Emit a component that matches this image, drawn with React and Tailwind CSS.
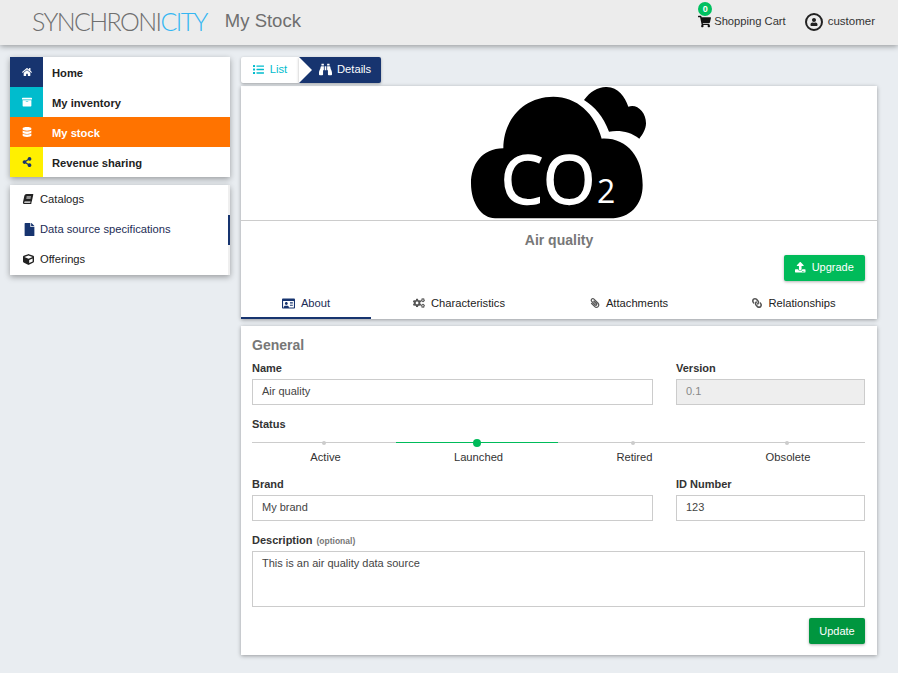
import React from "react";
import { FaHome, FaArchive, FaDatabase, FaShareAlt, FaBook, FaFile, FaCube, FaList, FaBinoculars, FaShoppingCart, FaUser, FaRegIdCard, FaCogs, FaPaperclip, FaLink, FaUpload } from "react-icons/fa";

const nav = [
  { icon: FaHome, label: "Home", box: "bg-[#17346f] text-white" },
  { icon: FaArchive, label: "My inventory", box: "bg-[#00bccd] text-white" },
  { icon: FaDatabase, label: "My stock", box: "bg-[#ff7300] text-white", active: true },
  { icon: FaShareAlt, label: "Revenue sharing", box: "bg-[#fff000] text-[#17346f]" },
];
const sub = [
  { icon: FaBook, label: "Catalogs", iconClass: "text-[10px] -skew-x-12" },
  { icon: FaFile, label: "Data source specifications", iconClass: "text-[13px]", active: true },
  { icon: FaCube, label: "Offerings", iconClass: "text-[11px]" },
];
const tabs = [
  { icon: FaRegIdCard, label: "About", active: true, iconClass: "text-[13px]" },
  { icon: FaCogs, label: "Characteristics", iconClass: "text-[12px]" },
  { icon: FaPaperclip, label: "Attachments", iconClass: "text-[10px] -scale-x-100" },
  { icon: FaLink, label: "Relationships", iconClass: "text-[10px] -scale-x-100" },
];
const steps = [
  { label: "Active" },
  { label: "Launched", active: true },
  { label: "Retired" },
  { label: "Obsolete" },
];

function Field({ label, hint, children }) {
  return (
    <div className="flex flex-col">
      <label className="h-[14px] leading-[14px] font-bold text-[#333] text-[11px] mb-[4px]">
        {label}
        {hint && <span className="text-[8.5px] text-[#777] ml-1">{hint}</span>}
      </label>
      {children}
    </div>
  );
}

function Input({ value, disabled }) {
  return (
    <div className={`h-[26px] border border-[#ccc] px-[9px] text-[11px] leading-[22px] ${disabled ? "bg-[#eee] text-[#888]" : "bg-white text-[#444]"}`}>
      {value}
    </div>
  );
}

function Cloud() {
  return (
    <svg width="238" height="134" viewBox="0 18 714 402" className="block overflow-visible">
      <path d="M190 205C125 205 93 255 93 310C93 370 125 415 165 415L510 415C570 415 608 375 608 315C608 230 560 172 485 176C465 100 410 50 340 50C250 50 190 120 190 205Z" fill="#000" />
      <path d="M432 60C450 35 475 20 500 21C535 22 555 50 565 80C590 70 618 95 618 130C618 148 607 165 598 176C570 155 540 150 507 155C490 110 465 80 432 60Z" fill="#000" />
      <text x="182" y="371" fontFamily="'Open Sans', sans-serif" fontSize="202" fill="#fff" stroke="#fff" strokeWidth="4">CO</text>
      <text x="471" y="368" fontFamily="'Open Sans', sans-serif" fontSize="96" fill="#fff">2</text>
    </svg>
  );
}

export default function App() {
  return (
    <div className="w-[898px] h-[673px] overflow-hidden bg-[#e9edf1] text-[11.2px] text-[#222]" style={{ fontFamily: "'Liberation Sans', Arial, sans-serif" }}>
      <header className="h-[45px] bg-[#ececec] shadow-[0_1px_6px_rgba(0,0,0,0.4)] flex items-center pl-[32px] pr-[23px] pb-[2px] relative">
        <div className="text-[25px] tracking-[-1.6px] leading-none font-light flex" style={{ fontFamily: "'Lato', sans-serif" }}>
          <span className="text-[#6f6f6f]">SYNCHRONI</span>
          <span className="text-[#35b6f2]">CITY</span>
        </div>
        <div className="ml-[18px] text-[18.5px] text-[#6f6f6f] leading-none">My Stock</div>
        <div className="ml-auto flex items-center text-[#333]">
          <div className="relative flex items-center">
            <FaShoppingCart className="text-[13px] text-[#111] mr-[3px]" />
            <span className="absolute left-0 top-[-11px] w-[14px] h-[14px] rounded-full bg-[#00c060] text-white text-[9px] font-bold text-center leading-[14px]">0</span>
            <span>Shopping Cart</span>
          </div>
          <div className="flex items-center ml-[19px] text-[11.5px]">
            <span className="w-[18px] h-[18px] rounded-full border-2 border-[#222] flex items-center justify-center mr-[5px]">
              <FaUser className="text-[8px] text-[#222]" />
            </span>
            <span>customer</span>
          </div>
        </div>
      </header>

      <div className="flex items-start pl-[10px] pt-[12px]">
        <aside className="w-[220px] shrink-0">
          <nav className="bg-white shadow-[0_2px_6px_rgba(0,0,0,0.35)]">
            {nav.map(({ icon: Icon, label, box, active }) => (
              <div key={label} className={`h-[30px] flex items-center font-bold ${active ? "bg-[#ff7300] text-white" : "text-[#222]"}`}>
                <span className={`w-[33px] h-[30px] flex items-center justify-center text-[10px] ${box}`}>
                  <Icon />
                </span>
                <span className="ml-[9px] pt-[2px]">{label}</span>
              </div>
            ))}
          </nav>
          <nav className="mt-[8px] w-[220px] bg-white shadow-[0_2px_6px_rgba(0,0,0,0.35)]">
            {sub.map(({ icon: Icon, label, active, iconClass }) => (
              <div key={label} className={`h-[30px] flex items-center pl-[13px] pb-[2px] border-r-2 ${active ? "border-[#17346f] text-[#1c2c55]" : "border-[#efefef] text-[#222]"}`}>
                <span className="w-[17px] flex justify-start">
                  <Icon className={`${iconClass} ${active ? "text-[#17346f]" : "text-[#222]"}`} />
                </span>
                <span>{label}</span>
              </div>
            ))}
          </nav>
        </aside>

        <main className="ml-[11px] w-[636px] shrink-0">
          <div className="flex h-[26px]">
            <div className="w-[58px] bg-white rounded-l-[2px] flex items-center justify-center text-[#00bccd] pb-[1px] shadow-[0_1px_3px_rgba(0,0,0,0.3)]">
              <FaList className="text-[11px] mr-[6px]" />
              List
            </div>
            <div className="relative w-[82px] bg-[#17346f] rounded-r-[2px] flex items-center pl-[20px] pb-[1px] text-white shadow-[0_1px_3px_rgba(0,0,0,0.3)]">
              <span className="absolute left-0 top-0 w-0 h-0 border-y-[13px] border-y-transparent border-l-[13px] border-l-white" />
              <FaBinoculars className="text-[13px] mr-[5px]" />
              Details
            </div>
          </div>

          <section className="mt-[3px] bg-white shadow-[0_1px_4px_rgba(0,0,0,0.35)]">
            <div className="flex justify-center border-b border-[#ccc]">
              <Cloud />
            </div>
            <h2 className="text-center text-[14px] font-bold text-[#777] mt-[11px] leading-[17px]">Air quality</h2>
            <div className="flex justify-end pr-[12px] mt-[6px]">
              <button className="w-[81px] h-[26px] rounded-[2px] bg-[#00bb5a] text-white text-[11px] flex items-center justify-center pb-[1px] shadow-[0_1px_3px_rgba(0,0,0,0.3)]">
                <FaUpload className="text-[10.5px] mr-[6px]" />
                Upgrade
              </button>
            </div>
            <div className="grid grid-cols-[130px_176px_164px_166px] h-[38px]">
              {tabs.map(({ icon: Icon, label, active, iconClass }) => (
                <div key={label} className={`h-[30px] mt-[8px] flex items-center justify-center border-b-2 ${active ? "border-[#17346f] text-[#1c2c55]" : "border-transparent text-[#222]"}`}>
                  <Icon className={`${iconClass} mr-[6px] ${active ? "text-[#17346f]" : "text-[#555]"}`} />
                  {label}
                </div>
              ))}
            </div>
          </section>

          <section className="mt-[7px] bg-white shadow-[0_1px_4px_rgba(0,0,0,0.35)] pl-[11px] pr-[12px] pt-[11px] h-[329px]">
            <h3 className="text-[14px] font-bold text-[#777] leading-[16px]">General</h3>
            <div className="grid grid-cols-[401px_189px] gap-x-[23px] mt-[8px]">
              <Field label="Name"><Input value="Air quality" /></Field>
              <Field label="Version"><Input value="0.1" disabled /></Field>
            </div>
            <div className="mt-[12px] font-bold text-[11px] text-[#333] leading-[14px]">Status</div>
            <div className="grid grid-cols-[144px_162px_150px_157px] mt-[11px]">
              {steps.map(({ label, active }) => (
                <div key={label} className="flex flex-col items-center">
                  <div className={`relative w-full h-px ${active ? "bg-[#00bb5a]" : "bg-[#ccc]"}`}>
                    <span className={`absolute top-1/2 left-1/2 -translate-x-1/2 -translate-y-1/2 rounded-full ${active ? "w-[8px] h-[8px] bg-[#00bb5a]" : "w-[4px] h-[4px] bg-[#ccc]"}`} />
                  </div>
                  <span className="mt-[8px] leading-[13px] text-[#333] pl-[3px]">{label}</span>
                </div>
              ))}
            </div>
            <div className="grid grid-cols-[401px_189px] gap-x-[23px] mt-[13px]">
              <Field label="Brand"><Input value="My brand" /></Field>
              <Field label="ID Number"><Input value="123" /></Field>
            </div>
            <div className="mt-[12px]">
              <Field label="Description" hint="(optional)">
                <div className="h-[56px] border border-[#ccc] px-[9px] py-[5px] text-[11px] leading-[13px] text-[#444]">This is an air quality data source</div>
              </Field>
            </div>
            <div className="flex justify-end mt-[11px]">
              <button className="w-[56px] h-[26px] rounded-[2px] bg-[#00963f] text-white text-[11px] shadow-[0_1px_3px_rgba(0,0,0,0.3)]">Update</button>
            </div>
          </section>
        </main>
      </div>
    </div>
  );
}
